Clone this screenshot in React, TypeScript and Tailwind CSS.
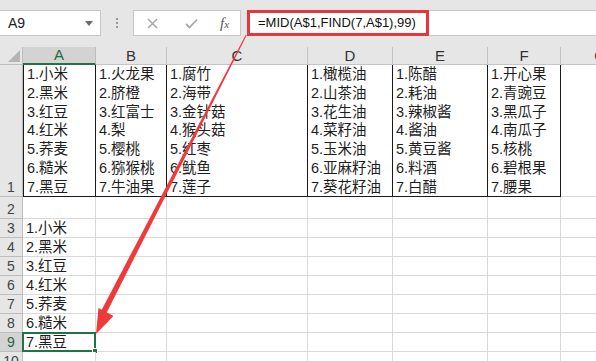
import React from "react";

const colA = ["1.小米", "2.黑米", "3.红豆", "4.红米", "5.荞麦", "6.糙米", "7.黑豆"];
const row1: string[][] = [
  colA,
  ["1.火龙果", "2.脐橙", "3.红富士", "4.梨", "5.樱桃", "6.猕猴桃", "7.牛油果"],
  ["1.腐竹", "2.海带", "3.金针菇", "4.猴头菇", "5.红枣", "6.鱿鱼", "7.莲子"],
  ["1.橄榄油", "2.山茶油", "3.花生油", "4.菜籽油", "5.玉米油", "6.亚麻籽油", "7.葵花籽油"],
  ["1.陈醋", "2.耗油", "3.辣椒酱", "4.酱油", "5.黄豆酱", "6.料酒", "7.白醋"],
  ["1.开心果", "2.青豌豆", "3.黑瓜子", "4.南瓜子", "5.核桃", "6.碧根果", "7.腰果"],
];
const letters = ["A", "B", "C", "D", "E", "F", "G"];
const font = { fontFamily: '"Liberation Sans", "Noto Sans CJK SC", sans-serif' };

function Cell({ children, className = "" }: { children?: React.ReactNode; className?: string }) {
  return (
    <div className={`border-r border-b border-[#d9d9d9] bg-white text-[14.5px] text-[#1e1e1e] pl-[3px] flex items-end leading-[18px] whitespace-nowrap overflow-visible ${className}`}>
      {children}
    </div>
  );
}

export default function App() {
  const rowsBelow = [2, 3, 4, 5, 6, 7, 8, 9, 10];
  return (
    <div className="relative w-[596px] h-[361px] overflow-hidden bg-[#e6e6e6]" style={font}>
      {/* top bar */}
      <div className="h-[47px] flex items-start pt-[10px]">
        <div className="w-[101px] h-[26px] bg-white border border-[#c8c8c8] border-l-0 flex items-center justify-between pl-[8px] pr-[7px]">
          <span className="text-[14px] text-[#222]">A9</span>
          <svg width="8" height="5" viewBox="0 0 8 5"><path d="M0 0H8L4 5Z" fill="#6b6b6b" /></svg>
        </div>
        <div className="w-[32px] h-[26px] flex flex-col items-center justify-center gap-[2px]">
          <span className="w-[2px] h-[2px] bg-[#9a9a9a]" />
          <span className="w-[2px] h-[2px] bg-[#9a9a9a]" />
          <span className="w-[2px] h-[2px] bg-[#9a9a9a]" />
        </div>
        <div className="w-[108px] h-[26px] bg-white border border-[#c8c8c8] flex items-center pl-[13px]">
          <svg width="11" height="11" viewBox="0 0 11 11"><path d="M1 1L10 10M10 1L1 10" stroke="#a9a9a9" strokeWidth="1.6" /></svg>
          <svg className="ml-[27px]" width="13" height="11" viewBox="0 0 13 11"><path d="M1 6L4.5 9.5L12 1.5" stroke="#a9a9a9" strokeWidth="1.8" fill="none" /></svg>
          <span className="ml-[22px] text-[15px] italic text-[#555]" style={{ fontFamily: '"Liberation Serif", serif' }}>f<span className="text-[11px]">x</span></span>
        </div>
        <div className="ml-[6px] flex-1 h-[26px] bg-white border-y border-[#c8c8c8] flex">
          <div className="w-[182px] h-[26px] -mt-[1px] border-[3px] border-[#e5373c] flex items-center pl-[8px] text-[13px] text-[#111]">
            =MID(A$1,FIND(7,A$1),99)
          </div>
        </div>
      </div>

      {/* grid */}
      <div className="w-[640px] grid grid-cols-[23px_73px_71px_141px_85px_95px_73px_79px] grid-rows-[18px_132px_22px_19px_19px_19px_19px_19px_19px_19px_19px]">
        {/* header row */}
        <div className="bg-[#e6e6e6] border-r border-b border-[#bdbdbd] relative">
          <svg className="absolute right-[2px] bottom-[2px]" width="12" height="12" viewBox="0 0 12 12"><path d="M12 0V12H0Z" fill="#b5b5b5" /></svg>
        </div>
        {letters.map((l, i) => (
          <div
            key={l}
            className={
              i === 0
                ? "bg-[#d3d3d3] border-r border-[#bdbdbd] border-b-2 border-b-[#217346] text-[#1e6b3f] text-[15px] flex items-end justify-center leading-[17px]"
                : "bg-[#e6e6e6] border-r border-b border-[#c4c4c4] text-[#333] text-[15px] flex items-end justify-center leading-[17px]"
            }
          >
            {l}
          </div>
        ))}

        {/* row 1 */}
        <div className="bg-[#e6e6e6] border-r border-b border-[#bdbdbd] text-[14px] text-[#444] flex items-end justify-center leading-[18px]">1</div>
        {row1.map((col, i) => (
          <div
            key={i}
            className={`bg-white border-r border-b border-[#1a1a1a] ${i === 0 ? "border-l" : ""} text-[14.5px] text-[#1e1e1e] pl-[3px] leading-[18.8px] whitespace-nowrap flex flex-col`}
          >
            {col.map((t) => (
              <span key={t}>{t}</span>
            ))}
          </div>
        ))}
        <Cell className="border-b-[#d9d9d9]" />

        {/* rows 2..10 */}
        {rowsBelow.map((r) => {
          const sel = r === 9;
          const text = r >= 3 && r <= 9 ? colA[r - 3] : "";
          return (
            <React.Fragment key={r}>
              <div
                className={`border-r border-b text-[14px] flex items-end justify-center leading-[18px] ${
                  sel ? "bg-[#d3d3d3] border-r-[#217346] border-b-[#bdbdbd] text-[#1e6b3f]" : "bg-[#e6e6e6] border-[#bdbdbd] text-[#444]"
                }`}
              >
                {r}
              </div>
              <Cell className="relative">
                {text}
                {sel && (
                  <div className="absolute -left-[1px] -top-[1px] -right-[1px] -bottom-[1px] border-2 border-[#217346]">
                    <div className="absolute -right-[4px] -bottom-[4px] w-[6px] h-[6px] bg-[#217346] border border-white" />
                  </div>
                )}
              </Cell>
              <Cell />
              <Cell />
              <Cell />
              <Cell />
              <Cell />
              <Cell />
            </React.Fragment>
          );
        })}
      </div>

      {/* annotation arrow */}
      <svg className="absolute left-0 top-0 pointer-events-none" width="596" height="361" viewBox="0 0 596 361">
        <polygon points="245.6,35 246.6,35.4 104,318 99,315" fill="#ee3a3a" />
        <polygon points="96,334 98.5,308 113.5,316" fill="#ee3a3a" />
      </svg>
    </div>
  );
}
